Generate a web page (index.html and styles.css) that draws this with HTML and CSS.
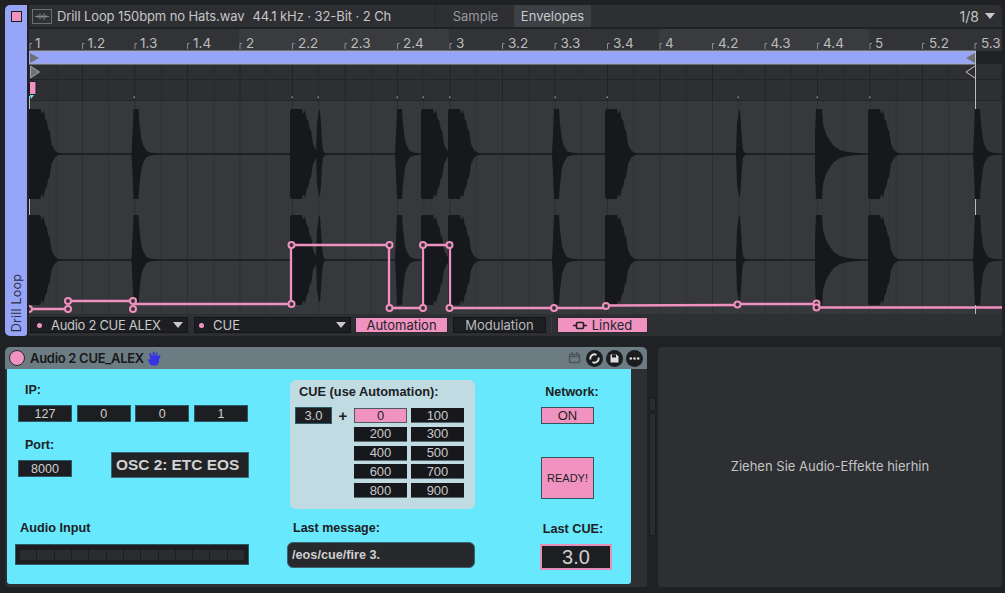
FILE: index.html
```html
<!DOCTYPE html>
<html lang="de">
<head>
<meta charset="utf-8">
<title>Drill Loop</title>
<link rel="stylesheet" href="styles.css">
</head>
<body>
<div class="app">
  <section class="clip">
    <aside class="strip">
      <span class="strip-btn"></span>
      <span class="strip-name">Drill Loop</span>
    </aside>
    <div class="clip-main">
      <header class="clip-head">
        <div class="file">
          <svg class="wave-icon" width="20" height="15" viewBox="0 0 20 15"><rect x=".5" y=".5" width="19" height="14" fill="none" stroke="#6e6f73"/><path d="M3 7.5h14M6 6v3M8 4.500v6M10 6v3M12 4v7M14 6v3" stroke="#85868a" fill="none"/></svg>
          <span class="file-name">Drill Loop 150bpm no Hats.wav</span>
          <span class="file-meta">44.1 kHz · 32-Bit · 2 Ch</span>
        </div>
        <div class="tab tab-sample">Sample</div>
        <div class="tab tab-active">Envelopes</div>
        <div class="grid-size">1/8 <i class="tri"></i></div>
      </header>
      <svg class="timeline" width="973" height="285" viewBox="29 29 973 285">
        <defs>
          <pattern id="grid" patternUnits="userSpaceOnUse" x="29.5" y="0" width="52.5" height="10">
            <rect x="0" width="1" height="10" fill="#2c2d31"/>
            <rect x="26.25" width="1" height="10" fill="#2f3034"/>
          </pattern>
          <pattern id="gridtop" patternUnits="userSpaceOnUse" x="29.500" y="0" width="52.5" height="10">
            <rect x="0" width="1" height="10" fill="#222327"/>
            <rect x="26.25" width="1" height="10" fill="#28292d"/>
          </pattern>
          <path id="w" d="M-1 0V-43L0-45H11L12-41H13L14-44 16-34H17L19-24H20L22-10 25-4 28-1.500 33 0 28 1.500 25 4 22 10 20 24H19L17 34H16L14 44 13 41H12L11 45H0L-1 43Z"/>
          <path id="b" d="M-2 0-1-20 0-45H5L6-30 8-14 10-8 13-3 17-1.500 21-1 25 0 21 1 17 1.500 13 3 10 8 8 14 6 30 5 45H0L-1 20Z"/>
          <path id="s" d="M-1 0 0-30 2-44H3L4-30 5-12 6-4 8-1 12 0 8 1 6 4 5 12 4 30 3 42H2L0 30Z"/>
          <path id="l" d="M-1 0-1-20 0-45H6L7-30 10-20 14-13 18-8 24-4 32-2 42-1 50 0 42 1 32 2 24 4 18 8 14 13 10 20 7 30 6 45H0L-1 20Z"/>
          <g id="chan">
            <rect x="29" y="-1" width="973" height="2" fill="#1f2024"/>
            <use href="#w" x="29.500"/>
            <use href="#b" x="133.500"/>
            <use href="#w" x="291"/>
            <use href="#s" x="317"/>
            <use href="#b" x="397"/>
            <use href="#w" x="422"/>
            <use href="#w" x="449"/>
            <use href="#b" x="554"/>
            <use href="#w" x="606"/>
            <use href="#s" x="737"/>
            <use href="#l" x="816"/>
            <use href="#w" x="869"/>
            <use href="#b" x="975"/>
          </g>
        </defs>

        <!-- ruler -->
        <rect class="r-dark" x="29" y="29" width="210" height="22"/>
        <rect class="r-light" x="239" y="29" width="210" height="22"/>
        <rect class="r-dark" x="449" y="29" width="210" height="22"/>
        <rect class="r-light" x="659" y="29" width="210" height="22"/>
        <rect class="r-dark" x="869" y="29" width="133" height="22"/>
        <path class="ticks" d="M30 49V43.500H32M82.500 49V43.500H84.500M135 49V43.500H137M187.500 49V43.500H189.500M240 49V43.500H242M292.500 49V43.500H294.500M345 49V43.500H347M397.500 49V43.500H399.500M450 49V43.500H452M502.500 49V43.500H504.500M555 49V43.500H557M607.500 49V43.500H609.500M660 49V43.500H662M712.500 49V43.500H714.500M765 49V43.500H767M817.500 49V43.500H819.500M870 49V43.500H872M922.500 49V43.500H924.500M975 49V43.500H977"/>
        <g class="ruler-text">
          <text x="35" y="48">1</text><text x="87.500" y="48">1.2</text><text x="140" y="48">1.3</text><text x="193" y="48">1.4</text>
          <text x="246" y="48">2</text><text x="298" y="48">2.2</text><text x="350.500" y="48">2.3</text><text x="403" y="48">2.4</text>
          <text x="456" y="48">3</text><text x="508" y="48">3.2</text><text x="560.500" y="48">3.3</text><text x="613" y="48">3.4</text>
          <text x="665" y="48">4</text><text x="718" y="48">4.2</text><text x="770.500" y="48">4.3</text><text x="823" y="48">4.4</text>
          <text x="875" y="48">5</text><text x="929" y="48">5.2</text><text x="981" y="48">5.3</text>
        </g>

        <!-- marker rows -->
        <rect x="29" y="64" width="973" height="36" fill="#2e2f33"/>
        <rect x="29" y="64" width="973" height="36" fill="url(#gridtop)"/>
        <rect x="29" y="79" width="973" height="1" fill="#232428"/>
        <rect x="29" y="100" width="973" height="1" fill="#26272b"/>

        <!-- waveform -->
        <rect x="29" y="101" width="973" height="213" fill="#37383c"/>
        <rect x="29" y="101" width="973" height="213" fill="url(#grid)"/>
        <rect x="976" y="101" width="26" height="213" fill="#333438"/>
        <g fill="#17181c">
          <use href="#chan" y="154"/>
          <use href="#chan" y="260"/>
        </g>

        <!-- loop brace -->
        <rect x="29" y="51" width="947" height="13" fill="#96a5f8"/>
        <rect x="29" y="50.500" width="947" height="1" fill="#a9a9ab"/>
        <rect x="29" y="63.500" width="947" height="1" fill="#a9a9ab"/>
        <path d="M30 53 39 58 30 63Z" fill="#6f7076"/>
        <path d="M975 53 966 58 975 63Z" fill="#6f7076"/>
        <path d="M30.500 66 39.500 72 30.500 78Z" fill="#707176" stroke="#a2a3a6"/>
        <path d="M975 66 966 72 975 78" fill="none" stroke="#c9c9c9"/>

        <!-- position lines -->
        <path d="M975.500 51V109M975.500 199V215M975.500 305V314M29.500 96V109M29.500 199V215" stroke="#bdbdbd" fill="none"/>
        <rect x="29.500" y="81.500" width="6.500" height="13" rx="1" fill="#f193c0" stroke="#1d1e22"/>
        <path d="M30 95H34L31 99Z" fill="#68e8fc"/>
        <g fill="#8d8e92">
          <rect x="133.500" y="96.500" width="1.500" height="1.500"/><rect x="291.500" y="96.500" width="1.500" height="1.500"/><rect x="317.500" y="96.500" width="1.500" height="1.500"/><rect x="396.500" y="96.500" width="1.500" height="1.500"/><rect x="422.500" y="96.500" width="1.500" height="1.500"/><rect x="449" y="96.500" width="1.500" height="1.500"/><rect x="554.500" y="96.500" width="1.500" height="1.500"/><rect x="606.500" y="96.500" width="1.500" height="1.500"/><rect x="737.500" y="96.500" width="1.500" height="1.500"/><rect x="816.500" y="96.500" width="1.500" height="1.500"/><rect x="869" y="96.500" width="1.500" height="1.500"/>
        </g>

        <!-- automation -->
        <path class="auto" d="M29 309H68M68 301H133M133 304H291V245H389V308H423V245H450V308H606M606 305.500 737 305M737 304H816M816 307.500H1002"/>
        <g class="node">
          <circle cx="68" cy="301" r="3"/><circle cx="68" cy="309" r="3"/><circle cx="133" cy="301" r="3"/><circle cx="133" cy="309" r="3"/>
          <circle cx="291.500" cy="304" r="3"/><circle cx="291.500" cy="245" r="3"/><circle cx="389.500" cy="245" r="3"/><circle cx="389.500" cy="308" r="3"/>
          <circle cx="423" cy="308" r="3"/><circle cx="423" cy="245" r="3"/><circle cx="449.500" cy="245" r="3"/><circle cx="449.500" cy="308" r="3"/>
          <circle cx="554" cy="308" r="3"/><circle cx="606" cy="306" r="3"/><circle cx="737.500" cy="304.500" r="3"/><circle cx="816.500" cy="303.500" r="3"/><circle cx="816.500" cy="307.500" r="3"/>
          <circle cx="29" cy="309" r="3"/>
        </g>
        <path d="M975.500 305V314" stroke="#bdbdbd"/>
      </svg>
      <footer class="env-bar">
        <div class="select sel-a"><i class="dot"></i><span>Audio 2 CUE ALEX</span><i class="tri"></i></div>
        <div class="select sel-b"><i class="dot"></i><span>CUE</span><i class="tri"></i></div>
        <div class="env-btn on btn-auto">Automation</div>
        <div class="env-btn btn-mod">Modulation</div>
        <div class="env-sep"></div>
        <div class="env-btn on btn-link">
          <svg width="14" height="9" viewBox="0 0 14 9"><rect x="3.500" y="1.500" width="7" height="6" rx="1" fill="none" stroke="#222" stroke-width="1.600"/><path d="M0 4.500H3.500M10.500 4.500H14" stroke="#222" stroke-width="1.600"/></svg>
          Linked
        </div>
      </footer>
    </div>
  </section>

  <section class="lower">
    <div class="device">
      <div class="dev-title">
        <span class="dev-power"></span>
        <span class="dev-name">Audio 2 CUE_ALEX</span>
        <svg class="hand" width="13" height="15" viewBox="0 0 13 15"><path d="M3 13 1 9M3.200 8 2.400 3M5.600 7.500V1.500M8 7.500 8.600 2.500M10 8.500 11.500 5M3 6H10V11.500L8.500 13.500H4Z" fill="#3534e0" stroke="#3534e0" stroke-width="1.900" stroke-linecap="round" stroke-linejoin="round"/></svg>
        <span class="dev-tools">
          <svg width="13" height="12" viewBox="0 0 13 12"><rect x="1.500" y="2.500" width="10" height="8" rx="1" fill="none" stroke="#4b565a" stroke-width="1.500"/><path d="M1.500 4.500H11.500M4 0V2M9 0V2" stroke="#4b565a" stroke-width="1.500"/></svg>
          <svg width="17" height="17" viewBox="0 0 17 17"><circle cx="8.500" cy="8.500" r="8.500" fill="#1b1c20"/><path d="M4.500 9.500A4 4 0 0 1 10.500 5M12.500 7.500A4 4 0 0 1 6.500 12" fill="none" stroke="#ddd" stroke-width="1.800"/></svg>
          <svg width="17" height="17" viewBox="0 0 17 17"><circle cx="8.500" cy="8.500" r="8.500" fill="#1b1c20"/><path d="M4.500 4.500H10.500L12.500 6.500V12.500H4.500Z" fill="#ddd"/><rect x="6" y="4.500" width="4" height="3" fill="#1b1c20"/></svg>
          <svg width="17" height="17" viewBox="0 0 17 17"><circle cx="8.500" cy="8.500" r="8.500" fill="#1b1c20"/><circle cx="4.800" cy="8.500" r="1.300" fill="#ddd"/><circle cx="8.500" cy="8.500" r="1.300" fill="#ddd"/><circle cx="12.200" cy="8.500" r="1.300" fill="#ddd"/></svg>
        </span>
      </div>
      <div class="dev-body">
        <div class="patch">
          <div class="col col-net">
            <div class="lbl lbl-ip">IP:</div>
            <div class="ip-row">
              <div class="num">127</div><div class="num">0</div><div class="num">0</div><div class="num">1</div>
            </div>
            <div class="lbl lbl-port">Port:</div>
            <div class="port-row">
              <div class="num port">8000</div>
              <div class="osc">OSC 2: ETC EOS</div>
            </div>
            <div class="lbl lbl-audio">Audio Input</div>
            <div class="meter">
              <i></i><i></i><i></i><i></i><i></i><i></i><i></i><i></i><i></i><i></i><i></i><i></i><i></i>
            </div>
          </div>
          <div class="col col-cue">
            <div class="cue-box">
              <div class="lbl lbl-cue">CUE (use Automation):</div>
              <div class="cue-body">
                <div class="num cue-val">3.0</div>
                <div class="plus">+</div>
                <div class="cue-grid">
                  <div class="cell active">0</div><div class="cell">100</div>
                  <div class="cell">200</div><div class="cell">300</div>
                  <div class="cell">400</div><div class="cell">500</div>
                  <div class="cell">600</div><div class="cell">700</div>
                  <div class="cell">800</div><div class="cell">900</div>
                </div>
              </div>
            </div>
            <div class="lbl lbl-last">Last message:</div>
            <div class="msg">/eos/cue/fire 3.</div>
          </div>
          <div class="col col-state">
            <div class="lbl lbl-center lbl-network">Network:</div>
            <div class="state-btn">ON</div>
            <div class="ready">READY!</div>
            <div class="lbl lbl-center lbl-lastcue">Last CUE:</div>
            <div class="last-cue">3.0</div>
          </div>
        </div>
      </div>
    </div>
    <div class="gutter"><span class="gutter-thumb"></span><span class="gutter-track"></span></div>
    <div class="drop">Ziehen Sie Audio-Effekte hierhin</div>
  </section>
</div>
</body>
</html>
```
FILE: styles.css
```css
* { box-sizing: border-box; }
html, body { margin: 0; padding: 0; }
body {
  width: 1005px;
  height: 593px;
  overflow: hidden;
  background: #202125;
  font-family: "Inter", "Liberation Sans", sans-serif;
  color: #c4c4c4;
}
.app { display: flex; flex-direction: column; padding: 5px 3px 6px 5px; gap: 11px; height: 593px; }

/* clip view */
.clip { display: flex; height: 331px; gap: 2px; }
.strip {
  width: 22px;
  background: #96a5f8;
  border-radius: 5px 0 3px 5px;
  display: flex;
  flex-direction: column;
  align-items: center;
  justify-content: space-between;
  padding: 6px 0 4px;
}
.strip-btn { width: 11px; height: 11px; background: #f193c0; border: 1px solid #1c1d21; }
.strip-name {
  writing-mode: vertical-rl;
  transform: rotate(180deg);
  font-size: 12.500px;
  letter-spacing: .2px;
  color: #2d2f42;
}
.clip-main { width: 973px; display: flex; flex-direction: column; }
.clip-head {
  height: 22px;
  margin-bottom: 2px;
  display: flex;
  align-items: stretch;
  background: #2e2f33;
  border-radius: 0 5px 0 0;
  font-size: 13px;
}
.file {
  width: 407px;
  display: flex;
  align-items: center;
  padding-left: 3px;
  margin-right: 1px;
  border-right: 1px solid #25262a;
}
.wave-icon { margin-right: 5px; }
.file-name { margin-right: 8px; letter-spacing: -.1px; color: #c6c6c6; }
.file-meta { letter-spacing: -.08px; color: #c6c6c6; }
.tab { display: flex; align-items: center; justify-content: center; }
.tab-sample { width: 77px; color: #97989b; }
.tab-active { width: 77px; background: #3c3f43; color: #c9c9c9; }
.grid-size {
  margin-left: auto;
  padding-right: 7px;
  display: flex;
  align-items: center;
  gap: 6px;
  font-size: 14px;
}
.tri {
  display: inline-block;
  width: 0;
  height: 0;
  border-left: 5px solid transparent;
  border-right: 5px solid transparent;
  border-top: 6px solid #c9c9c9;
}

.timeline { display: block; }
.r-dark { fill: #323337; }
.r-light { fill: #3a3b3f; }
.ticks { fill: none; stroke: #8d8e91; stroke-width: 1; }
.ruler-text text { font-family: "Inter", "Liberation Sans", sans-serif; font-size: 13.500px; fill: #bcbcbc; }
.auto { fill: none; stroke: #ef90bf; stroke-width: 2.300; }
.node circle { fill: #34353a; stroke: #ef90bf; stroke-width: 2; }

.env-bar {
  height: 22px;
  background: #2e2f33;
  border-radius: 0 0 4px 0;
  display: flex;
  align-items: center;
  padding-left: 1px;
  font-size: 13px;
}
.select {
  height: 16px;
  background: #1d1e22;
  border: 1px solid #141518;
  display: flex;
  align-items: center;
  padding: 0 4px 0 6px;
  color: #c8c8c8;
}
.sel-a { width: 158px; margin-right: 6px; letter-spacing: -.3px; }
.sel-b { width: 157px; margin-right: 4px; padding-left: 4px; }
.select .dot { width: 5px; height: 5px; border-radius: 50%; background: #f193c0; margin-right: 9px; flex: none; }
.select span { flex: 1; white-space: nowrap; }
.env-btn {
  height: 16px;
  display: flex;
  align-items: center;
  justify-content: center;
  background: #1d1e22;
  border: 1px solid #141518;
  color: #b9babc;
}
.env-btn.on { background: #f193c0; color: #24252a; border-color: #2a2a2e; }
.btn-auto { width: 93px; margin-right: 5px; }
.btn-mod { width: 93px; }
.env-sep { width: 1px; height: 16px; background: #3a3b3f; margin: 0 5px; }
.btn-link { width: 91px; gap: 5px; }

/* lower row */
.lower { display: flex; height: 240px; }
.device {
  width: 642px;
  display: flex;
  flex-direction: column;
}
.dev-title {
  height: 22px;
  background: #6c7c82;
  border-radius: 5px 5px 0 0;
  display: flex;
  align-items: center;
  padding: 0 4px 0 4px;
}
.dev-power { width: 16px; height: 16px; border-radius: 50%; background: #f193c0; border: 1px solid #26272b; margin-right: 5px; }
.dev-name { font-size: 13px; font-weight: 600; color: #17181b; letter-spacing: -.3px; }
.hand { margin-left: 4px; }
.dev-tools { margin-left: auto; display: flex; align-items: center; gap: 3px; }
.dev-tools svg:first-child { margin-right: 2px; }
.dev-body { flex: 1; background: #2e2f33; padding: 0 16px 3px 2px; border-radius: 0 0 4px 4px; }
.patch {
  height: 100%;
  background: #68e8fc;
  border-radius: 0 0 3px 3px;
  display: flex;
  font-family: "Liberation Sans", Arial, sans-serif;
  font-size: 13px;
}
.col { display: flex; flex-direction: column; }
.lbl { font-weight: 700; font-size: 12.500px; color: #1c2024; line-height: 14px; }
.num {
  height: 17px;
  background: #1d1e22;
  border: 1px solid #2a5a66;
  color: #cfcfcf;
  display: flex;
  align-items: center;
  justify-content: center;
  font-size: 12.500px;
}

.col-net { width: 234px; margin-left: 8px; }
.lbl-ip { margin: 14px 0 0 10px; }
.ip-row { display: flex; margin: 8px 0 0 3px; width: 230px; justify-content: space-between; }
.ip-row .num { width: 54px; }
.lbl-port { margin: 16px 0 0 10px; }
.port-row { display: flex; align-items: flex-start; padding-left: 3px; height: 26px; }
.port { width: 54px; margin-top: 8px; }
.osc {
  width: 138px;
  height: 26px;
  margin-left: 39px;
  background: #222327;
  border: 1px solid #3a6570;
  color: #d2d2d2;
  font-weight: 700;
  font-size: 15.400px;
  line-height: 24px;
  padding-left: 4px;
  white-space: nowrap;
}
.lbl-audio { margin: 43px 0 0 5px; font-size: 12.700px; }
.meter {
  margin-top: 9px;
  height: 21px;
  background: #1d1e22;
  border: 1px solid #2a5a66;
  display: flex;
  gap: 1px;
  align-items: center;
  padding: 0 4px;
}
.meter i { flex: 1; height: 10px; background: #2b2c30; }

.col-cue { width: 188px; margin-left: 38px; }
.cue-box {
  margin: 11px 0 0 3px;
  width: 185px;
  height: 129px;
  background: #c0dbe2;
  border-radius: 6px;
  display: flex;
  flex-direction: column;
}
.lbl-cue { margin: 5px 0 0 9px; font-size: 12.800px; }
.cue-body { display: flex; margin: 8px 0 0 5px; align-items: flex-start; }
.cue-val { width: 37px; font-size: 13px; }
.plus { width: 22px; text-align: center; font-weight: 700; font-size: 15px; color: #1c2024; line-height: 17px; }
.cue-grid {
  display: grid;
  grid-template-columns: 53px 53px;
  grid-auto-rows: 15px;
  column-gap: 4px;
  row-gap: 3.750px;
  margin-top: 1px;
}
.cell {
  background: #17181c;
  border: 1px solid #5b6a70;
  border-width: 0 0 1px;
  color: #c9c9c9;
  font-size: 13px;
  display: flex;
  align-items: center;
  justify-content: center;
}
.cell.active { background: #f193c0; color: #25262a; border: 1px solid #4d5a60; }
.lbl-last { margin: 12px 0 0 6px; font-size: 12.500px; }
.msg {
  margin-top: 7px;
  height: 26px;
  background: #28292d;
  border: 1px solid #3a6570;
  border-radius: 6px;
  color: #cfcfcf;
  font-weight: 700;
  font-size: 12.700px;
  line-height: 24px;
  padding-left: 4px;
}

.col-state { width: 72px; margin-left: 65px; align-items: center; }
.lbl-center { white-space: nowrap; }
.lbl-network { margin: 16px 8px 0 0; }
.state-btn {
  width: 53px;
  height: 17px;
  margin: 8px 0 0 -17px;
  background: #f193c0;
  border: 1px solid #35535b;
  color: #1e1f23;
  font-size: 13px;
  display: flex;
  align-items: center;
  justify-content: center;
}
.ready {
  width: 53px;
  height: 42px;
  margin: 33px 0 0 -17px;
  background: #f193c0;
  border: 1px solid #35535b;
  color: #1e1f23;
  font-size: 11px;
  display: flex;
  align-items: center;
  justify-content: center;
}
.lbl-lastcue { margin: 23px 6px 0 0; font-size: 12.700px; }
.last-cue {
  width: 72px;
  height: 26px;
  margin-top: 8px;
  background: #1d1e22;
  border: 2px solid #e58fb9;
  color: #cfcfcf;
  font-size: 20px;
  display: flex;
  align-items: center;
  justify-content: center;
}

.gutter {
  width: 11px;
  padding: 51px 2px 0;
  display: flex;
  flex-direction: column;
  gap: 2px;
}
.gutter-thumb { height: 13px; background: #2b2c30; border: 1px solid #1c1d21; }
.gutter-track { height: 123px; background: #2b2c30; border: 1px solid #1c1d21; }
.drop {
  flex: 1;
  background: #2e2f33;
  border-radius: 4px;
  display: flex;
  align-items: center;
  justify-content: center;
  font-size: 13px;
  color: #c4c4c4;
  padding-bottom: 2px;
}
```
